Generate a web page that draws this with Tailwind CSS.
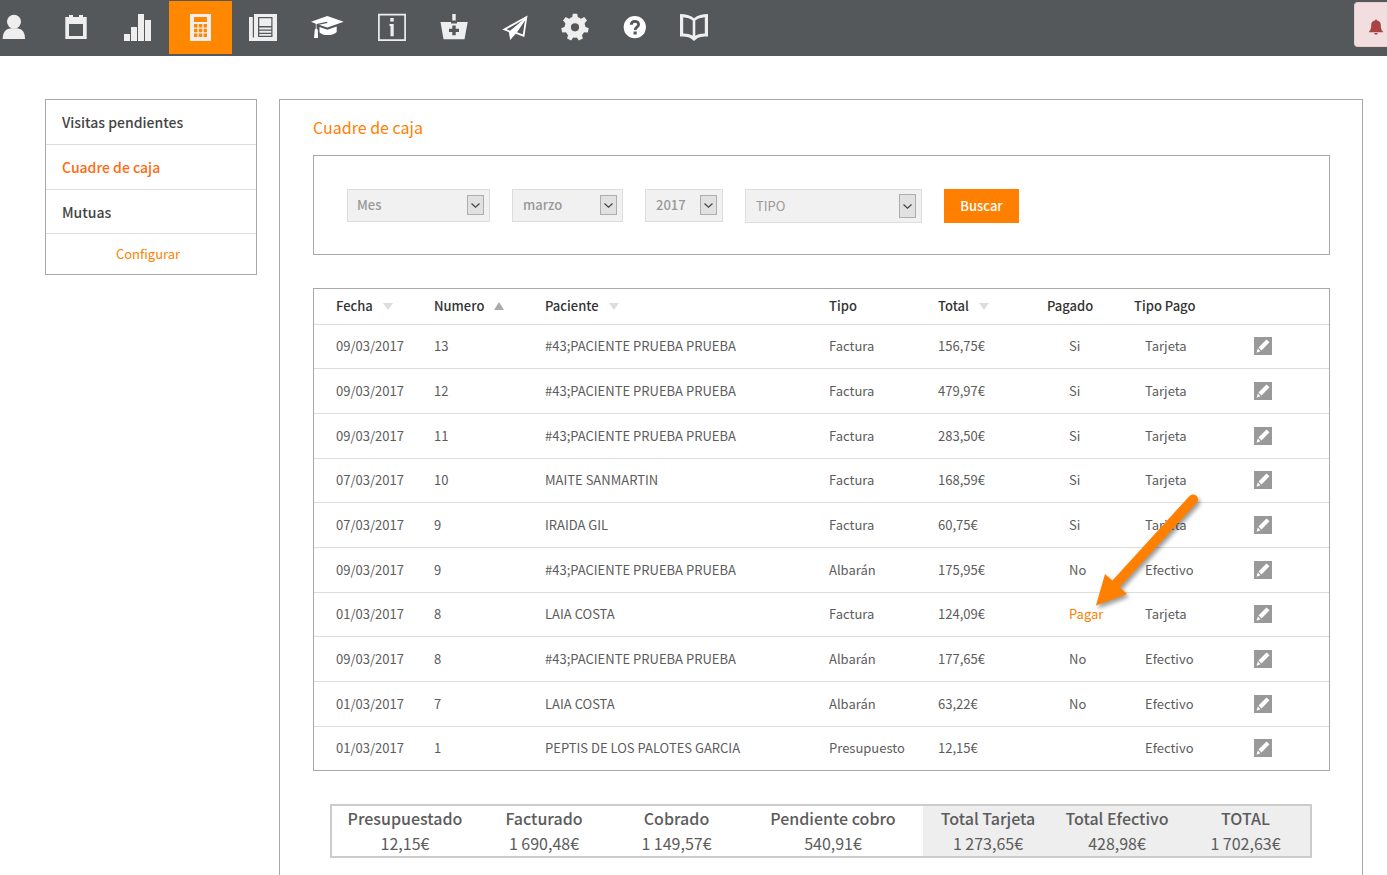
<!DOCTYPE html>
<html lang="es">
<head>
    <meta charset="UTF-8">
    <meta name="viewport" content="width=device-width, initial-scale=1.0">
    <title>Cuadre de caja</title>
    <script src="https://cdn.jsdelivr.net/npm/@tailwindcss/browser@4"></script>
</head>
<body class="bg-white font-['Noto_Sans_CJK_SC','Noto_Sans',sans-serif] text-[13px] leading-5 text-[#5c5c5c] overflow-x-hidden">
    <!-- barra superior -->
    <header class="flex items-start h-14 bg-[#54585a] text-[#eee]">
        <nav class="flex pt-px">
            <a href="#" aria-label="Pacientes" class="flex justify-center w-[45px] h-[53px] pt-3 pr-[17px]">
                <svg class="shrink-0 size-7" viewBox="0 0 28 28" fill="currentColor"><circle cx="14" cy="8.8" r="7"/><path d="M2.7 26c0-6.500 2.500-10 8.300-10.800h6c5.800.8 8 4.300 8 10.800z"/></svg>
            </a>
            <a href="#" aria-label="Agenda" class="flex justify-center w-[62px] h-[53px] pt-3">
                <svg class="size-7" viewBox="0 0 28 28" fill="currentColor" fill-rule="evenodd"><path d="M3.300 4H7V2h4v2h6V2h4v2h3.700v22H3.300zM7 11v12h14V11z"/></svg>
            </a>
            <a href="#" aria-label="Estadísticas" class="flex justify-center w-[62px] h-[53px] pt-3">
                <svg class="size-7" viewBox="0 0 28 28" fill="currentColor"><path d="M0 21h6v7H0zM7 14h6v14H7zM14 1h6v27h-6zM21 7h6v21h-6z"/></svg>
            </a>
            <a href="#" aria-label="Caja" class="flex justify-center w-[63px] h-[53px] pt-3 pr-px bg-[#ff8800]">
                <svg class="size-7" viewBox="0 0 28 28" fill="currentColor" fill-rule="evenodd"><path d="M4 1h21v27H4zM8 4v5h13V4zM8 11v3.500h3.500V11zM12.800 11v3.500h3.500V11zM17.600 11v3.500H21V11zM8 15.800v3.500h3.500v-3.500zM12.800 15.800v3.500h3.500v-3.500zM17.600 15.800v3.500H21v-3.500zM8 20.600V24h3.500v-3.400zM12.800 20.600V24h3.500v-3.400zM17.600 20.600V24H21v-3.400z"/></svg>
            </a>
            <a href="#" aria-label="Noticias" class="flex justify-center w-[62px] h-[53px] pt-3">
                <svg class="size-7" viewBox="0 0 28 28" fill="currentColor" fill-rule="evenodd"><path d="M0 4h3.800v20.500H5V1h23v27H0zM9 4v20h14.500V4zM10.300 5.200h12V13h-12zM10.300 14.500h12v2h-12zM10.300 17.800h12v2h-12zM10.300 21h12v1.800h-12z"/></svg>
            </a>
            <a href="#" aria-label="Formación" class="flex justify-center w-[66px] h-[53px] pt-3 text-white">
                <svg class="size-7 overflow-visible" viewBox="0 0 28 28" fill="currentColor"><path d="M14.300 3 30.700 8.700 14.300 14.600 6 11.700l8.500-1.800-.4-1.200L3.500 11v4.500l1.300 1.200L5 25H1l.8-8.300 1-1.200v-4.800L-2 8.700z"/><path d="M6.500 14l7.800 2.700 9.400-3.300v5.500c-3 4-14 4.300-17.200.3z"/></svg>
            </a>
            <a href="#" aria-label="Información" class="flex justify-center w-[63px] h-[53px] pt-3">
                <svg class="size-7" viewBox="0 0 28 28" fill="currentColor"><path d="M.9 1.700h26.200v25.500H.9z" fill="none" stroke="currentColor" stroke-width="1.700"/><path d="M12.300 5h3.400v3.500h-3.400zM11.500 11h4.200v12.200h-3.200V13h-1z"/></svg>
            </a>
            <a href="#" aria-label="Farmacia" class="flex justify-center w-[62px] h-[53px] pt-3">
                <svg class="size-7" viewBox="0 0 28 28" fill="currentColor" fill-rule="evenodd"><path d="M12.300 1h3.400v6.500h-3.400zM.5 9H11v1.500h6V9h10.700l-3.200 17.300h-21zM12.300 12.500v3.200H9v3.400h3.300v3.200h3.400v-3.200H19v-3.400h-3.300v-3.200z"/></svg>
            </a>
            <a href="#" aria-label="Enviar" class="flex justify-center w-[60px] h-[53px] pt-3 text-white">
                <svg class="size-7" viewBox="0 0 28 28" fill="currentColor" fill-rule="evenodd"><path d="M1.300 16.500 26.500 2.500 23.300 24l-8.600-3.200L9.200 27 7.800 19zM5.500 16.300l3.500 1.500L22 7zM16 19.300l5.800 2.200L24 7.500z"/></svg>
            </a>
            <a href="#" aria-label="Ajustes" class="flex justify-center w-[60px] h-[53px] pt-3">
                <svg class="size-7" viewBox="-14 -14.300 28 28" fill="currentColor">
                    <path d="M-3-9-2.200-13.600H2.200L3-9z"/>
                    <path d="M-3-9-2.200-13.600H2.200L3-9z" transform="rotate(51.430)"/>
                    <path d="M-3-9-2.200-13.600H2.200L3-9z" transform="rotate(102.860)"/>
                    <path d="M-3-9-2.200-13.600H2.200L3-9z" transform="rotate(154.290)"/>
                    <path d="M-3-9-2.200-13.600H2.200L3-9z" transform="rotate(205.710)"/>
                    <path d="M-3-9-2.200-13.600H2.200L3-9z" transform="rotate(257.140)"/>
                    <path d="M-3-9-2.200-13.600H2.200L3-9z" transform="rotate(308.570)"/>
                    <circle r="7.300" fill="none" stroke="currentColor" stroke-width="6.400"/>
                </svg>
            </a>
            <a href="#" aria-label="Ayuda" class="flex justify-center w-[60px] h-[53px] pt-3 text-white">
                <svg class="size-7" viewBox="0 0 28 28"><circle cx="13.800" cy="14.200" r="11.100" fill="currentColor"/><path d="M10.200 11.800c.2-4.600 7.500-4.500 7.400-.3-.1 2.600-3.500 2.800-3.500 5.600" fill="none" stroke="#54585a" stroke-width="2.800"/><path d="M12.500 18.500h3.200v3h-3.200z" fill="#54585a"/></svg>
            </a>
            <a href="#" aria-label="Manual" class="flex justify-center w-[58px] h-[53px] pt-3">
                <svg class="size-7" viewBox="0 0 28 28" fill="currentColor" fill-rule="evenodd"><path d="M0 1c5.500 0 10.500 1 14 4.200C17.500 2 22.500 1 28 1v22.500c-5 0-9.500.5-11.500 2.500L14 28l-2.500-2C9.500 24 5 23.500 0 23.500zM3.200 4.300v16.200c3.800.2 7 .7 9.500 2.300V7.600C10.500 5.700 7 4.700 3.200 4.300zM24.800 4.300c-3.800.4-7.300 1.400-9.500 3.300v15.200c2.500-1.600 5.700-2.100 9.500-2.300z"/></svg>
            </a>
        </nav>
        <button aria-label="Avisos" class="flex items-center justify-end ml-auto mt-0.5 w-[33px] h-[45px] pr-1 pt-1 bg-[#f2dede] border border-r-0 border-[#ebccd1] rounded-l text-[#a94442]">
            <svg class="w-3.5 h-4" viewBox="0 0 14 16" fill="currentColor"><path d="M6 1.500a1 1 0 0 1 2 0c2.600.5 3.800 2.200 3.800 4.800 0 3.500.7 5 2.200 6.400v.6H0v-.6c1.500-1.400 2.200-2.900 2.200-6.400C2.200 3.700 3.400 2 6 1.500zM5.200 14h3.600a1.800 1.800 0 0 1-3.600 0z"/></svg>
        </button>
    </header>

    <div class="flex items-start gap-[22px] pt-[43px] pl-[45px] pr-6">
        <!-- menu lateral -->
        <aside class="shrink-0 w-[212px] border border-[#a9a9a9] text-sm font-medium text-[#444] divide-y divide-[#ddd]">
            <a href="#" class="flex items-center h-[45px] px-4">Visitas pendientes</a>
            <a href="#" class="flex items-center h-[45px] px-4 text-[#ff6a10]">Cuadre de caja</a>
            <a href="#" class="flex items-center h-11 px-4">Mutuas</a>
            <a href="#" class="flex items-center justify-center h-10 pr-1.5 text-[13px] font-normal text-[#ff7f00]">Configurar</a>
        </aside>

        <main class="flex-1 min-w-0 border border-[#a9a9a9] pl-[33px] pr-8 pt-[15px] pb-16">
            <h1 class="text-base leading-6 text-[#ff7f00]">Cuadre de caja</h1>

            <!-- filtros -->
            <form class="flex items-start gap-[22px] mt-4 px-[33px] pt-[33px] pb-[31px] border border-[#a9a9a9] text-[#999]">
                <div class="relative w-[143px]">
                    <select aria-label="Periodo" class="block appearance-none w-full h-[33px] pl-[9px] pb-0.5 bg-[#f1f1f1] border border-[#ddd] font-medium">
                        <option>Mes</option>
                        <option>Día</option>
                    </select>
                    <span class="absolute right-1.5 top-1.5 flex items-center justify-center w-[17px] h-5 bg-[#e1e1e1] border border-[#adadad] pointer-events-none">
                        <svg class="w-[9px] h-[5px]" viewBox="0 0 9 5" fill="none" stroke="#444" stroke-width="1.200"><path d="M.5.500l4 3.700 4-3.700"/></svg>
                    </span>
                </div>
                <div class="relative w-[111px]">
                    <select aria-label="Mes" class="block appearance-none w-full h-[33px] pl-2.5 pb-0.5 bg-[#f1f1f1] border border-[#ddd] font-medium">
                        <option>marzo</option>
                        <option>abril</option>
                    </select>
                    <span class="absolute right-1.5 top-1.5 flex items-center justify-center w-[17px] h-5 bg-[#e1e1e1] border border-[#adadad] pointer-events-none">
                        <svg class="w-[9px] h-[5px]" viewBox="0 0 9 5" fill="none" stroke="#444" stroke-width="1.200"><path d="M.5.500l4 3.700 4-3.700"/></svg>
                    </span>
                </div>
                <div class="relative w-[78px]">
                    <select aria-label="Año" class="block appearance-none w-full h-[33px] pl-2.5 pb-0.5 bg-[#f1f1f1] border border-[#ddd] font-medium">
                        <option>2017</option>
                        <option>2016</option>
                    </select>
                    <span class="absolute right-1.5 top-1.5 flex items-center justify-center w-[17px] h-5 bg-[#e1e1e1] border border-[#adadad] pointer-events-none">
                        <svg class="w-[9px] h-[5px]" viewBox="0 0 9 5" fill="none" stroke="#444" stroke-width="1.200"><path d="M.5.500l4 3.700 4-3.700"/></svg>
                    </span>
                </div>
                <div class="relative w-[177px]">
                    <select aria-label="Tipo" class="block appearance-none w-full h-[34px] pl-2.5 bg-[#f1f1f1] border border-[#ddd]">
                        <option>TIPO</option>
                        <option>Factura</option>
                        <option>Albarán</option>
                    </select>
                    <span class="absolute right-1.5 top-[5px] flex items-center justify-center w-[17px] h-6 bg-[#e1e1e1] border border-[#adadad] pointer-events-none">
                        <svg class="w-[9px] h-[5px]" viewBox="0 0 9 5" fill="none" stroke="#444" stroke-width="1.200"><path d="M.5.500l4 3.700 4-3.700"/></svg>
                    </span>
                </div>
                <button type="button" class="w-[75px] h-[34px] bg-[#ff8000] font-medium text-white">Buscar</button>
            </form>

            <!-- listado de documentos -->
            <div class="relative mt-[33px] border border-[#a9a9a9]">
                <table class="w-full table-fixed text-left">
                    <colgroup>
                        <col class="w-[98px]"><col class="w-[111px]"><col><col class="w-[109px]"><col class="w-[109px]"><col class="w-[87px]"><col class="w-[120px]"><col class="w-[97px]">
                    </colgroup>
                    <thead class="text-[#333]">
                        <tr class="h-[35px] border-b border-[#ddd]">
                            <th class="pl-[22px] font-medium"><button class="flex items-center gap-2.5">Fecha <svg class="w-2.5 h-2" viewBox="0 0 10 8" fill="#ddd"><path d="M0 1h10L5 8z"/></svg></button></th>
                            <th class="pl-[22px] font-medium"><button class="flex items-center gap-2.5">Numero <svg class="w-2.5 h-2" viewBox="0 0 10 8" fill="#aaa"><path d="M0 8h10L5 0z"/></svg></button></th>
                            <th class="pl-[22px] font-medium"><button class="flex items-center gap-2.5">Paciente <svg class="w-2.5 h-2" viewBox="0 0 10 8" fill="#ddd"><path d="M0 1h10L5 8z"/></svg></button></th>
                            <th class="pl-[22px] font-medium">Tipo</th>
                            <th class="pl-[22px] font-medium"><button class="flex items-center gap-2.5">Total <svg class="w-2.5 h-2" viewBox="0 0 10 8" fill="#ddd"><path d="M0 1h10L5 8z"/></svg></button></th>
                            <th class="pl-[22px] font-medium">Pagado</th>
                            <th class="pl-[22px] font-medium">Tipo Pago</th>
                            <th></th>
                        </tr>
                    </thead>
                    <tbody id="list"></tbody>
                </table>
                <!-- flecha que señala el enlace Pagar -->
                <svg class="absolute top-[201px] right-[124px] w-[115px] h-[122px] drop-shadow-[2px_3px_2px_rgba(0,0,0,0.4)] pointer-events-none" viewBox="0 0 115 122" fill="#ff8000">
                    <path d="M103 9.500 25 95" stroke="#ff8000" stroke-width="10" stroke-linecap="round"/>
                    <path d="M6 115.500 15 84l22 20z"/>
                </svg>
            </div>

            <!-- totales -->
            <table class="table-fixed w-[calc(100%-35px)] mt-[33px] mx-[17px] border-2 border-[#ccc] border-separate border-spacing-0 text-center text-base leading-[25px]">
                <colgroup>
                    <col class="w-[146px]"><col class="w-[132px]"><col class="w-[133px]"><col class="w-[180px]"><col class="w-[130px]"><col class="w-[128px]"><col class="w-[129px]">
                </colgroup>
                <thead>
                    <tr>
                        <th class="font-medium">Presupuestado</th>
                        <th class="font-medium">Facturado</th>
                        <th class="font-medium">Cobrado</th>
                        <th class="font-medium">Pendiente cobro</th>
                        <th class="font-medium bg-[#eee]">Total Tarjeta</th>
                        <th class="font-medium bg-[#eee]">Total Efectivo</th>
                        <th class="font-medium bg-[#eee]">TOTAL</th>
                    </tr>
                </thead>
                <tbody>
                    <tr>
                        <td>12,15€</td>
                        <td>1 690,48€</td>
                        <td>1 149,57€</td>
                        <td>540,91€</td>
                        <td class="bg-[#eee]">1 273,65€</td>
                        <td class="bg-[#eee]">428,98€</td>
                        <td class="bg-[#eee]">1 702,63€</td>
                    </tr>
                </tbody>
            </table>
        </main>
    </div>

    <script>
        const documentos = [
            ['09/03/2017', '13', '#43;PACIENTE PRUEBA PRUEBA', 'Factura', '156,75€', 'Si', 'Tarjeta'],
            ['09/03/2017', '12', '#43;PACIENTE PRUEBA PRUEBA', 'Factura', '479,97€', 'Si', 'Tarjeta'],
            ['09/03/2017', '11', '#43;PACIENTE PRUEBA PRUEBA', 'Factura', '283,50€', 'Si', 'Tarjeta'],
            ['07/03/2017', '10', 'MAITE SANMARTIN', 'Factura', '168,59€', 'Si', 'Tarjeta'],
            ['07/03/2017', '9', 'IRAIDA GIL', 'Factura', '60,75€', 'Si', 'Tarjeta'],
            ['09/03/2017', '9', '#43;PACIENTE PRUEBA PRUEBA', 'Albarán', '175,95€', 'No', 'Efectivo'],
            ['01/03/2017', '8', 'LAIA COSTA', 'Factura', '124,09€', 'Pagar', 'Tarjeta'],
            ['09/03/2017', '8', '#43;PACIENTE PRUEBA PRUEBA', 'Albarán', '177,65€', 'No', 'Efectivo'],
            ['01/03/2017', '7', 'LAIA COSTA', 'Albarán', '63,22€', 'No', 'Efectivo'],
            ['01/03/2017', '1', 'PEPTIS DE LOS PALOTES GARCIA', 'Presupuesto', '12,15€', '', 'Efectivo']
        ];

        // filas del listado
        document.getElementById('list').innerHTML = documentos.map(function (d) {
            const pagado = d[5] === 'Pagar' ? '<a href="#" class="text-[#ff7f00]">Pagar</a>' : d[5];
            return `
                <tr class="h-[45px] nth-[3n+1]:h-11 border-b border-[#ddd] last:border-b-0">
                    <td class="pl-[22px]">${d[0]}</td>
                    <td class="pl-[22px]">${d[1]}</td>
                    <td class="pl-[22px]">${d[2]}</td>
                    <td class="pl-[22px]">${d[3]}</td>
                    <td class="pl-[22px]">${d[4]}</td>
                    <td class="pl-11">${pagado}</td>
                    <td class="pl-[33px]">${d[6]}</td>
                    <td class="pl-[22px]">
                        <button aria-label="Editar" class="block">
                            <svg class="size-[18px]" viewBox="0 0 18 18"><path d="M0 0h18v18H0z" fill="#999"/><path d="M12.500 2.500 15.500 5.300 7.500 13.500 4.500 10.600zM3.800 11.500l2.700 2.700L2.500 15.700z" fill="#fff"/></svg>
                        </button>
                    </td>
                </tr>`;
        }).join('');
    </script>
</body>
</html>
